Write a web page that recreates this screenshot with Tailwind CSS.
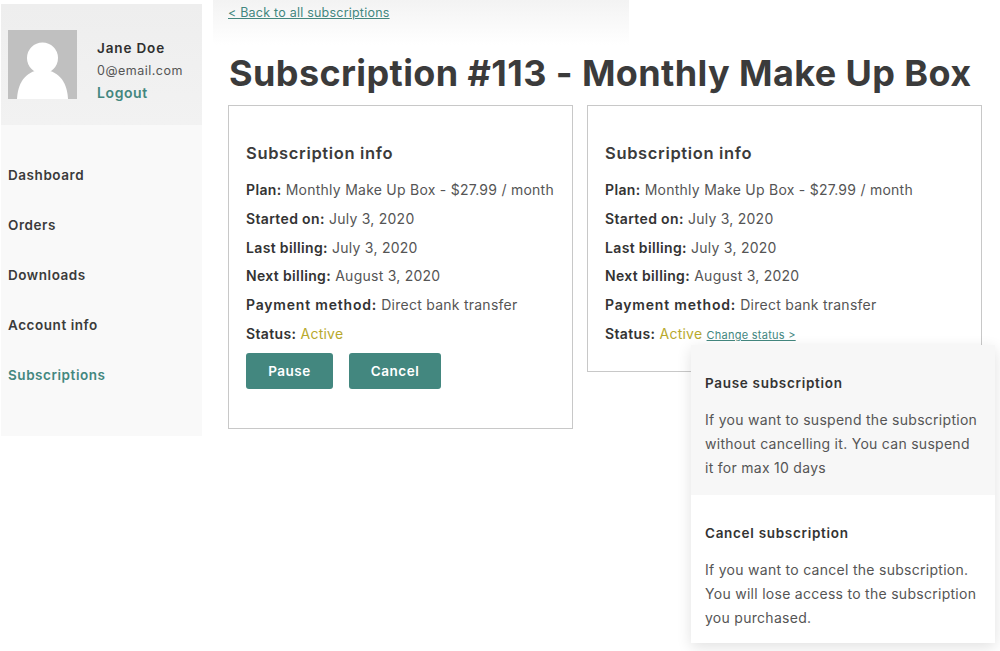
<!DOCTYPE html>
<html lang="en">
<head>
  <meta charset="UTF-8">
  <meta name="viewport" content="width=device-width, initial-scale=1.0">
  <script src="https://cdn.jsdelivr.net/npm/@tailwindcss/browser@4"></script>
  <title>Subscription #113</title>
</head>
<body class="bg-white font-['Inter',sans-serif] text-[#3b3b3b] overflow-hidden">
  <div class="relative flex w-[1000px] h-[651px] overflow-hidden">
    <!-- sidebar -->
    <aside class="w-[201px] h-[432px] ml-px mt-1 bg-[#f9f9f9] shrink-0">
      <div class="flex h-[121px] pl-[7px] pt-[26px] bg-gradient-to-b from-[#eeeeee] to-[#f2f2f2]">
        <div class="w-[69px] h-[69px] bg-[#c0c0c0] overflow-hidden">
          <svg viewBox="0 0 69 69" class="w-[69px] h-[69px]"><circle cx="34.5" cy="28" r="15.5" fill="#fff"/><path d="M9 69C10 50 20 40 34.5 40S59 50 60 69Z" fill="#fff"/></svg>
        </div>
        <div class="ml-5 pt-2">
          <div class="text-[13.5px] leading-5 font-semibold tracking-[0.85px] text-[#2f2f2f]">Jane Doe</div>
          <div class="mt-1 text-[12.5px] leading-[18px] tracking-[0.5px] text-[#555]">0@email.com</div>
          <a class="block mt-[3px] text-[14px] leading-5 font-semibold tracking-[0.6px] text-[#43877f]">Logout</a>
        </div>
      </div>
      <nav class="pl-[7px] pt-10 flex flex-col gap-[30px] text-[13.5px] leading-5 font-semibold tracking-[0.55px] text-[#3b3b3b]">
        <a>Dashboard</a>
        <a>Orders</a>
        <a>Downloads</a>
        <a>Account info</a>
        <a class="text-[#43877f]">Subscriptions</a>
      </nav>
    </aside>

    <!-- main column -->
    <main class="ml-[11px] w-[788px]">
      <div class="w-[416px] h-[45px] pl-[15px] pt-[5px] bg-gradient-to-b from-[#f3f3f3] to-white">
        <a class="text-[12.5px] leading-4 underline tracking-[0.22px] text-[#43877f] block">&lt; Back to all subscriptions</a>
      </div>
      <h1 class="ml-4 mt-1 text-[36px] leading-[48px] font-bold tracking-[0.4px] whitespace-nowrap text-[#3b3b3b]">Subscription #113 - Monthly Make Up Box</h1>
      <div class="flex items-start ml-[15px] mt-2 gap-[14px]">
        <section class="w-[345px] h-[324px] border border-[#c8c8c8] pl-[17px] pt-9">
          <h2 class="text-[16.5px] leading-[22px] font-semibold tracking-[0.65px] mb-4 text-[#3b3b3b]">Subscription info</h2>
          <div class="flex flex-col gap-[8.8px] text-[14px] leading-5 tracking-[0.25px] text-[#555]">
            <p><b class="font-semibold tracking-[0.35px] text-[#333]">Plan:</b> Monthly Make Up Box - $27.99 / month</p>
            <p><b class="font-semibold tracking-[0.35px] text-[#333]">Started on:</b> July 3, 2020</p>
            <p><b class="font-semibold tracking-[0.35px] text-[#333]">Last billing:</b> July 3, 2020</p>
            <p><b class="font-semibold tracking-[0.35px] text-[#333]">Next billing:</b> August 3, 2020</p>
            <p><b class="font-semibold tracking-[0.8px] text-[#333]">Payment method:</b> Direct bank transfer</p>
            <p><b class="font-semibold tracking-[0.35px] text-[#333]">Status:</b> <span class="text-[#b8a92c]">Active</span></p>
          </div>
          <div class="flex gap-4 mt-[9px]">
            <button class="w-[87px] h-9 rounded-[3px] bg-[#43877f] text-white text-[13.5px] font-semibold tracking-[0.5px]">Pause</button>
            <button class="w-[92px] h-9 rounded-[3px] bg-[#43877f] text-white text-[13.5px] font-semibold tracking-[0.5px]">Cancel</button>
          </div>
        </section>
        <section class="w-[395px] h-[267px] border border-[#c8c8c8] pl-[17px] pt-9">
          <h2 class="text-[16.5px] leading-[22px] font-semibold tracking-[0.65px] mb-4 text-[#3b3b3b]">Subscription info</h2>
          <div class="flex flex-col gap-[8.8px] text-[14px] leading-5 tracking-[0.25px] text-[#555]">
            <p><b class="font-semibold tracking-[0.35px] text-[#333]">Plan:</b> Monthly Make Up Box - $27.99 / month</p>
            <p><b class="font-semibold tracking-[0.35px] text-[#333]">Started on:</b> July 3, 2020</p>
            <p><b class="font-semibold tracking-[0.35px] text-[#333]">Last billing:</b> July 3, 2020</p>
            <p><b class="font-semibold tracking-[0.35px] text-[#333]">Next billing:</b> August 3, 2020</p>
            <p><b class="font-semibold tracking-[0.8px] text-[#333]">Payment method:</b> Direct bank transfer</p>
            <p><b class="font-semibold tracking-[0.35px] text-[#333]">Status:</b> <span class="text-[#b8a92c]">Active</span> <a class="text-[11px] underline tracking-[0.25px] text-[#43877f]">Change status &gt;</a></p>
          </div>
        </section>
      </div>
    </main>

    <!-- status popover -->
    <div class="absolute left-[691px] top-[345px] w-[304px] h-[298px] bg-white shadow-[0_4px_14px_rgba(0,0,0,0.12)]">
      <div class="h-[150px] bg-[#f7f7f7] pl-[14px] pr-[15px] pt-[28px]">
        <h3 class="text-[13.5px] leading-5 font-semibold tracking-[0.7px] text-[#333]">Pause subscription</h3>
        <p class="mt-[15px] text-[14px] leading-6 tracking-[0.28px] text-[#555]">If you want to suspend the subscription without cancelling it. You can suspend it for max 10 days</p>
      </div>
      <div class="pl-[14px] pr-[15px] pt-[28px]">
        <h3 class="text-[13.5px] leading-5 font-semibold tracking-[0.7px] text-[#333]">Cancel subscription</h3>
        <p class="mt-[15px] text-[14px] leading-6 tracking-[0.28px] text-[#555]">If you want to cancel the subscription. You will lose access to the subscription you purchased.</p>
      </div>
    </div>
  </div>
</body>
</html>
